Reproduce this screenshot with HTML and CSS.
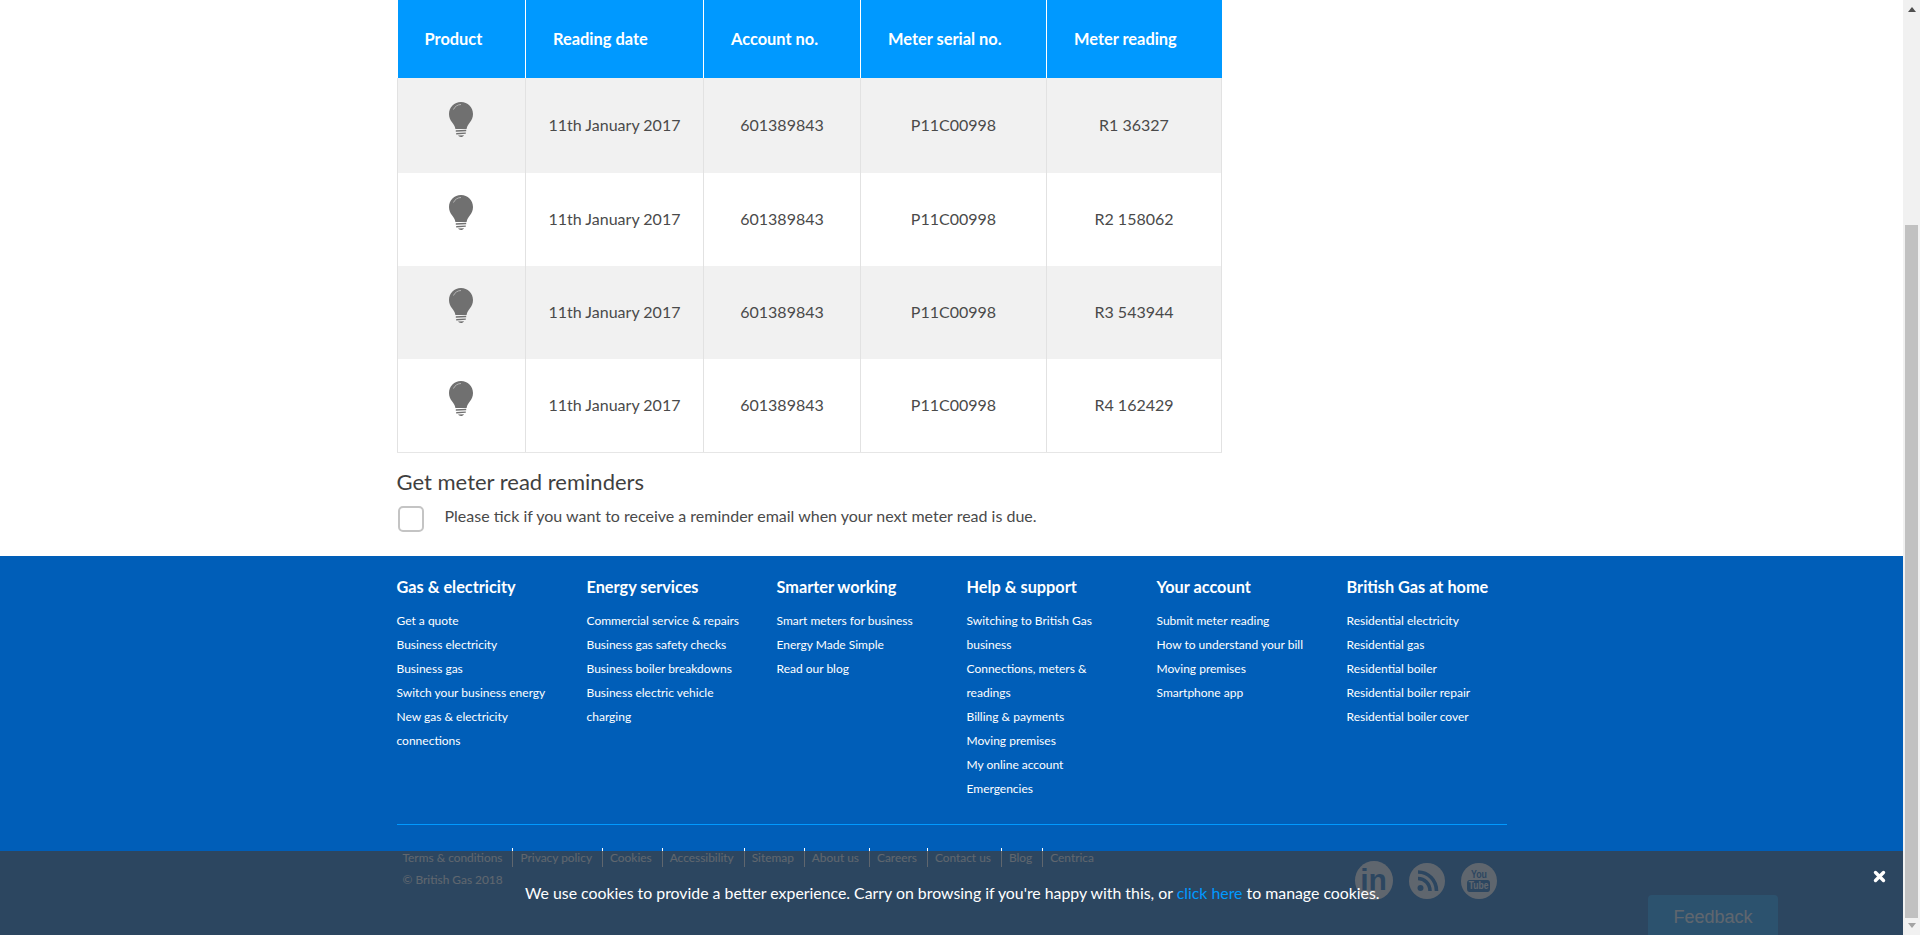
FILE: index.html
```html
<!DOCTYPE html>
<html lang="en">
<head>
<meta charset="utf-8">
<title>Meter readings</title>
<link rel="stylesheet" href="styles.css">
</head>
<body>
<svg class="defs" width="0" height="0" aria-hidden="true">
  <symbol id="bulb" viewBox="0 0 24 35">
    <path fill="#707070" d="M12 0C5.200 0 0 5.200 0 12c0 3.600 1.400 6.200 3.200 8.600 1.500 2 2.800 3.600 3.200 6.400h11.200c.4-2.800 1.700-4.400 3.200-6.400C22.600 18.200 24 15.600 24 12 24 5.200 18.800 0 12 0z"/>
    <path fill="none" stroke="#b5b5b5" stroke-width="1" d="M4.500 7.500C6 4.200 8.800 2.600 12 2.500"/>
    <path fill="#707070" d="M6.800 28.300l10.400-.6v1.500l-10.400.6zM7.200 31l9.600-.6v1.400l-9.600.6zM9 33.600l6-.4c-.6 1.100-1.700 1.800-3 1.800-1.300 0-2.400-.5-3-1.400z"/>
  </symbol>
</svg>
<div class="main">
  <div class="container">
    <table class="readings">
      <colgroup>
        <col class="c1"><col class="c2"><col class="c3"><col class="c4"><col class="c5">
      </colgroup>
      <thead>
        <tr><th>Product</th><th>Reading date</th><th>Account no.</th><th>Meter serial no.</th><th>Meter reading</th></tr>
      </thead>
      <tbody>
        <tr class="first odd"><td class="prod"><svg class="bulb"><use href="#bulb"/></svg></td><td>11th January 2017</td><td>601389843</td><td>P11C00998</td><td>R1 36327</td></tr>
        <tr><td class="prod"><svg class="bulb"><use href="#bulb"/></svg></td><td>11th January 2017</td><td>601389843</td><td>P11C00998</td><td>R2 158062</td></tr>
        <tr class="odd"><td class="prod"><svg class="bulb"><use href="#bulb"/></svg></td><td>11th January 2017</td><td>601389843</td><td>P11C00998</td><td>R3 543944</td></tr>
        <tr><td class="prod"><svg class="bulb"><use href="#bulb"/></svg></td><td>11th January 2017</td><td>601389843</td><td>P11C00998</td><td>R4 162429</td></tr>
      </tbody>
    </table>
    <h2 class="rem-title">Get meter read reminders</h2>
    <div class="rem-row">
      <span class="check"></span>
      <span class="rem-text">Please tick if you want to receive a reminder email when your next meter read is due.</span>
    </div>
  </div>
  <footer class="footer">
    <div class="container">
      <div class="cols">
        <div class="col">
          <h3>Gas &amp; electricity</h3>
          <a>Get a quote</a><a>Business electricity</a><a>Business gas</a><a>Switch your business energy</a><a>New gas &amp; electricity connections</a>
        </div>
        <div class="col">
          <h3>Energy services</h3>
          <a>Commercial service &amp; repairs</a><a>Business gas safety checks</a><a>Business boiler breakdowns</a><a>Business electric vehicle charging</a>
        </div>
        <div class="col">
          <h3>Smarter working</h3>
          <a>Smart meters for business</a><a>Energy Made Simple</a><a>Read our blog</a>
        </div>
        <div class="col">
          <h3>Help &amp; support</h3>
          <a>Switching to British Gas business</a><a>Connections, meters &amp; readings</a><a>Billing &amp; payments</a><a>Moving premises</a><a>My online account</a><a>Emergencies</a>
        </div>
        <div class="col">
          <h3>Your account</h3>
          <a>Submit meter reading</a><a>How to understand your bill</a><a>Moving premises</a><a>Smartphone app</a>
        </div>
        <div class="col">
          <h3>British Gas at home</h3>
          <a>Residential electricity</a><a>Residential gas</a><a>Residential boiler</a><a>Residential boiler repair</a><a>Residential boiler cover</a>
        </div>
      </div>
      <div class="legal">
        <div class="legal-left">
          <nav class="legal-links">
            <a>Terms &amp; conditions</a><a>Privacy policy</a><a>Cookies</a><a>Accessibility</a><a>Sitemap</a><a>About us</a><a>Careers</a><a>Contact us</a><a>Blog</a><a>Centrica</a>
          </nav>
          <p class="copy">© British Gas 2018</p>
        </div>
        <div class="social">
          <span class="soc soc-in">in</span>
          <span class="soc soc-rss">
            <svg viewBox="0 0 36 36" width="36" height="36"><circle cx="11.500" cy="25" r="3" fill="#005eb8"/><path fill="none" stroke="#005eb8" stroke-width="3.600" d="M9 15.500c6.500 0 12 5.200 12 12.500M9 9c10.500 0 18.500 8.500 18.500 19"/></svg>
          </span>
          <span class="soc soc-yt"><span class="yt-you">You</span><span class="yt-tube">Tube</span></span>
        </div>
      </div>
    </div>
  </footer>
  <button class="feedback">Feedback</button>
  <div class="cookie">
    <p class="cookie-text">We use cookies to provide a better experience. Carry on browsing if you're happy with this, or <a>click here</a> to manage cookies.</p>
    <svg class="cookie-close" viewBox="0 0 13 13" width="13" height="13"><path fill="none" stroke="#fff" stroke-width="3.400" stroke-linecap="round" d="M2.500 2.500l8 8M10.500 2.500l-8 8"/></svg>
  </div>
</div>
<aside class="scrollbar">
  <span class="arrow-up"></span>
  <span class="thumb"></span>
  <span class="arrow-down"></span>
</aside>
</body>
</html>
```
FILE: styles.css
```css
* { box-sizing: border-box; }
html, body { margin: 0; padding: 0; height: 935px; overflow: hidden; }
body {
  display: flex;
  width: 1920px;
  background: #fff;
  font-family: Lato, "Noto Sans", sans-serif;
  color: #4a4a4a;
}
.defs { position: absolute; }
.main { position: relative; width: 1903px; height: 935px; overflow: hidden; display: flex; flex-direction: column; }
.container { width: 1110px; margin-left: 396.500px; }

/* table */
.readings { border-collapse: collapse; table-layout: fixed; width: 824px; margin-left: .5px; }
.c1 { width: 128px; } .c2 { width: 178px; } .c3 { width: 157px; } .c4 { width: 186px; } .c5 { width: 175px; }
.readings th {
  height: 78px; padding: 0 0 2px 27px; background: #0099ff; color: #fff;
  font-size: 16.400px; font-weight: 700; text-align: left;
  border-left: 1px solid #fff; border-right: 1px solid #fff;
}
.readings th:first-child { border-left: 0; }
.readings th:last-child { border-right: 0; }
.readings td {
  height: 93px; padding: 0 0 2px; text-align: center; font-size: 16px;
  border: 1px solid #e2e2e2; border-top: 0; border-bottom: 0;
}
.readings tr:last-child td { border-bottom: 1px solid #e6e6e6; }
.readings .first td { height: 95px; }
.odd td { background: #f1f1f1; }
.readings .prod { vertical-align: top; padding: 0 2px 0 0; }
.bulb { display: block; width: 24px; height: 35px; margin: 22px auto 0; }
.first .bulb { margin-top: 24px; }

.rem-title { margin: 16px 0 0; font-size: 22px; font-weight: 400; line-height: 26px; color: #3f3f3f; }
.rem-row { display: flex; align-items: center; margin-top: 11px; margin-left: 1px; height: 26px; }
.check { width: 26px; height: 26px; border: 2px solid #c4c4c4; border-radius: 5px; background: #fff; }
.rem-text { margin-left: 21px; padding-bottom: 6px; font-size: 16px; color: #4a4a4a; }

/* footer */
.footer { margin-top: 24px; flex: 1; background: #005eb8; color: #fff; }
.cols { display: grid; grid-template-columns: repeat(6, 190px); padding-top: 20px; height: 269px; border-bottom: 1px solid #0099ff; }
.col a { display: block; width: 160px; font-size: 12px; line-height: 24px; }
.col h3 { margin: 0 0 11px; font-size: 16.300px; line-height: 22px; font-weight: 700; }
.legal { display: flex; justify-content: space-between; padding: 23px 10px 0 6px; }
.legal-links { display: flex; }
.legal-links a { font-size: 11.900px; line-height: 19px; padding: 0 10px 0 7px; border-left: 1px solid #fff; }
.legal-links a:first-child { border-left: 0; padding-left: 0; }
.copy { margin: 3px 0 0; font-size: 11.900px; line-height: 19px; }
.social { display: flex; gap: 16px; align-items: flex-start; }
.soc { display: flex; flex-direction: column; align-items: center; justify-content: center; width: 36px; height: 36px; margin-top: 15px; border-radius: 50%; background: #fff; color: #005eb8; }
.soc-in { width: 38px; height: 39px; margin-top: 13px; font: 700 30px/1 "Liberation Sans", sans-serif; }
.yt-you { font: 700 11px/11px "Liberation Sans", sans-serif; transform: scaleX(.8); }
.yt-tube { font: 700 10px/12px "Liberation Sans", sans-serif; background: #005eb8; color: #fff; border-radius: 3px; padding: 0 2px; transform: scaleX(.85); }

/* feedback */
.feedback {
  position: absolute; left: 1648px; top: 895px; width: 130px; height: 40px; padding: 4px 0 0;
  background: #0099ff; border: 0; border-radius: 4px 4px 0 0; color: #fff;
  font: 18px "Liberation Sans", sans-serif;
}

/* cookie */
.cookie { position: absolute; left: 0; right: 0; top: 851px; height: 84px; background: rgba(55, 64, 74, .8); }
.cookie-text { position: absolute; left: 525px; top: 31px; margin: 0; font-size: 15.850px; line-height: 22px; color: #fff; white-space: nowrap; }
.cookie-text a { color: #0099ff; }
.cookie-close { position: absolute; left: 1873px; top: 19px; }

/* scrollbar */
.scrollbar { position: relative; width: 17px; height: 935px; background: #f1f1f1; display: flex; flex-direction: column; align-items: center; }
.thumb { width: 13px; height: 693px; margin-top: 213px; background: #c1c1c1; }
.arrow-up { width: 0; height: 0; margin-top: 7px; border: 4px solid transparent; border-top: 0; border-bottom: 5px solid #505050; }
.arrow-down { width: 0; height: 0; margin-top: 5px; border: 4px solid transparent; border-bottom: 0; border-top: 5px solid #a3a3a3; }
```
